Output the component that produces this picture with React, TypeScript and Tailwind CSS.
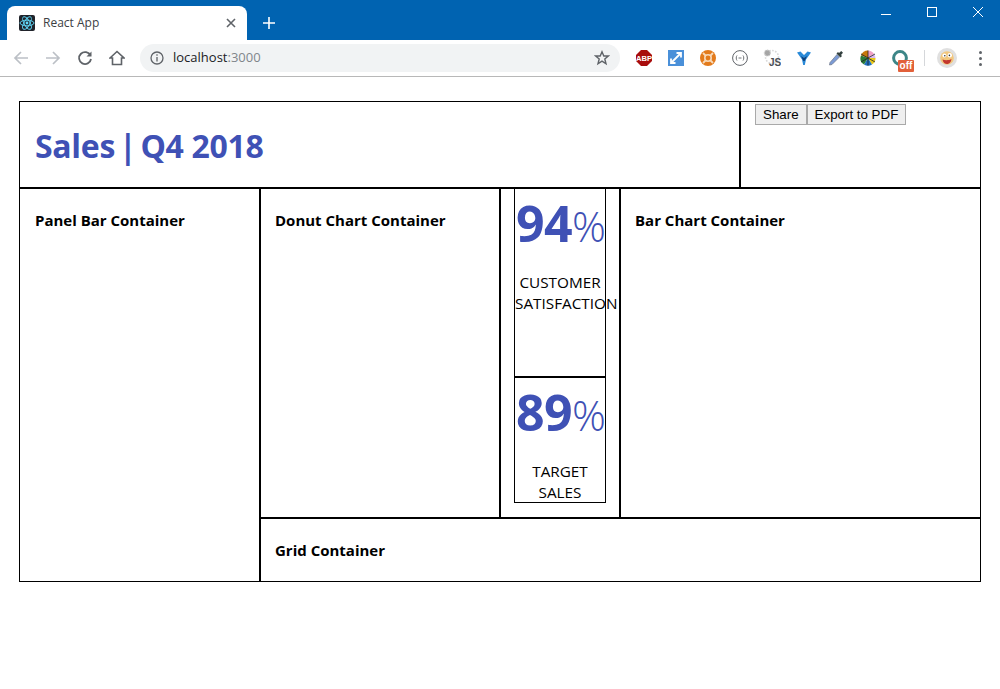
const Favicon = () => (
  <svg width="16" height="16" viewBox="0 0 16 16" className="shrink-0">
    <rect width="16" height="16" rx="2" fill="#20232a" />
    <g fill="none" stroke="#61dafb" strokeWidth="0.9">
      <ellipse cx="8" cy="8" rx="7" ry="2.8" />
      <ellipse cx="8" cy="8" rx="7" ry="2.8" transform="rotate(60 8 8)" />
      <ellipse cx="8" cy="8" rx="7" ry="2.8" transform="rotate(120 8 8)" />
    </g>
    <circle cx="8" cy="8" r="1.4" fill="#61dafb" />
  </svg>
);

const Abp = () => (
  <svg width="16" height="16" viewBox="0 0 16 16">
    <polygon points="5,0 11,0 16,5 16,11 11,16 5,16 0,11 0,5" fill="#a80c0c" />
    <text x="8" y="10.8" textAnchor="middle" fontSize="7.6" fontWeight="700" fill="#fff" fontFamily="Liberation Sans, sans-serif">ABP</text>
  </svg>
);

const Expand = () => (
  <svg width="16" height="16" viewBox="0 0 16 16">
    <rect width="16" height="16" fill="#4a90d9" />
    <path d="M3.5 12.5 12.5 3.5M8.5 3h4.5v4.5M3 8.5V13h4.5" fill="none" stroke="#fff" strokeWidth="1.8" />
  </svg>
);

const OrangeRing = () => (
  <svg width="16" height="16" viewBox="0 0 16 16">
    <circle cx="8" cy="8" r="8" fill="#e37b1c" />
    <circle cx="8" cy="8" r="3.2" fill="none" stroke="#f7d9b8" strokeWidth="1.6" />
    <path d="M3 3 5.5 5.5M13 3 10.5 5.5M3 13 5.5 10.5M13 13 10.5 10.5" stroke="#f7d9b8" strokeWidth="1.8" />
  </svg>
);

const Braces = () => (
  <svg width="16" height="16" viewBox="0 0 16 16" fill="none" stroke="#5f6368">
    <circle cx="8" cy="8" r="7.4" strokeWidth="1" />
    <path d="M5 5.5C4 6.5 4 9.5 5 10.5M11 5.5C12 6.5 12 9.5 11 10.5M6.5 8h3" strokeWidth="0.9" />
  </svg>
);

const JsGear = () => (
  <svg width="18" height="18" viewBox="0 0 18 18">
    <circle cx="9" cy="8" r="6.5" fill="none" stroke="#d8d8d8" strokeWidth="1.6" strokeDasharray="1.6 1.4" />
    <circle cx="4.4" cy="4" r="3" fill="#a5a5a5" stroke="#cfcfcf" strokeWidth="1.2" strokeDasharray="1.4 0.8" />
    <text x="12" y="16.5" textAnchor="middle" fontSize="10" fontWeight="700" fill="#4a4f55" fontFamily="Liberation Sans, sans-serif">JS</text>
  </svg>
);

const Vee = () => (
  <svg width="16" height="16" viewBox="0 0 16 16">
    <path d="M1 2.5 4.5 1.5 8 5 11.5 1.5 15 2.5 10 9.5 8.8 15H7.2L6 9.5Z" fill="#2a8ad8" />
    <path d="M5 6 8 8 11 6 8.6 11H7.4Z" fill="#0f3f78" />
  </svg>
);

const Dropper = () => (
  <svg width="16" height="16" viewBox="0 0 16 16">
    <path d="M9 4.5 11.5 7 4 14.5 1.5 15 2 12.5Z" fill="#7b9bd6" stroke="#6d7686" strokeWidth="0.7" />
    <path d="M8.5 3.5 12.5 7.5 14 6 13 5 15 2.8 13.2 1 11 3 10 2Z" fill="#33403f" />
  </svg>
);

const Wheel = () => (
  <svg width="16" height="16" viewBox="0 0 16 16">
    <path d="M8 8V0.5A7.5 7.5 0 0 0 1 5.5Z" fill="#c8780c" />
    <path d="M8 8V0.5A7.5 7.5 0 0 1 14 4Z" fill="#f0a0c8" />
    <path d="M8 8 14 4A7.5 7.5 0 0 1 15.5 8Z" fill="#d8b8f0" />
    <path d="M8 8H15.5A7.5 7.5 0 0 1 12 14.5Z" fill="#e8c818" />
    <path d="M8 8 12 14.5A7.5 7.5 0 0 1 4 14.5Z" fill="#1f6fc0" />
    <path d="M8 8 4 14.5A7.5 7.5 0 0 1 1 5.5Z" fill="#2a7a3a" />
    <path d="M8 0.5V15.5M1 4 15 12M1 12 15 4" stroke="#222" strokeWidth="0.8" />
  </svg>
);

const OffBadge = () => (
  <div className="relative w-[16px] h-[16px]">
    <svg width="16" height="16" viewBox="0 0 16 16" fill="none">
      <circle cx="8" cy="8" r="6.4" stroke="#3c8587" strokeWidth="3" />
    </svg>
    <span className="absolute left-[6px] top-[10px] w-[16px] h-[12px] rounded-[1px] bg-[#e2603a] text-white text-[10px] leading-[12px] font-bold text-center font-['Liberation_Sans',sans-serif]">
      off
    </span>
  </div>
);

const Avatar = () => (
  <svg width="20" height="20" viewBox="0 0 20 20">
    <circle cx="10" cy="10" r="10" fill="#e0e0e0" />
    <circle cx="10" cy="10" r="6.8" fill="#f2c77e" />
    <circle cx="7.4" cy="7.6" r="2" fill="#fff" />
    <circle cx="12.8" cy="7.2" r="2.2" fill="#fff" />
    <circle cx="7.8" cy="7.8" r="0.8" fill="#333" />
    <circle cx="12.4" cy="7.4" r="0.8" fill="#333" />
    <path d="M5.5 11.5C8 12.5 12 12.5 14.5 11C14 15 11.5 16 10 16 8 16 6 14.5 5.5 11.5Z" fill="#c2362e" />
  </svg>
);

const extensions = [
  { id: "abp", icon: <Abp /> },
  { id: "expand", icon: <Expand /> },
  { id: "ring", icon: <OrangeRing /> },
  { id: "braces", icon: <Braces /> },
  { id: "js", icon: <JsGear /> },
  { id: "vee", icon: <Vee /> },
  { id: "dropper", icon: <Dropper /> },
  { id: "wheel", icon: <Wheel /> },
  { id: "off", icon: <OffBadge /> },
];

const Browser = () => (
  <div className="font-['Open_Sans',sans-serif]">
    <div className="h-[40px] bg-[#0063b1] flex items-end pl-[7px]">
      <div className="relative w-[240px] h-[34px] bg-white rounded-t-[8px] flex items-center pl-[12px] pr-[11px] gap-[8px]">
        <Favicon />
        <span className="text-[12px] text-[#3c4043]">React App</span>
        <svg width="10" height="10" viewBox="0 0 10 10" className="ml-auto" stroke="#5f6368" strokeWidth="1.6">
          <path d="M1 1 9 9M9 1 1 9" />
        </svg>
      </div>
      <svg width="14" height="14" viewBox="0 0 14 14" stroke="#fff" strokeWidth="1.6" className="ml-[15px] mb-[10px]">
        <path d="M7 1V13M1 7H13" />
      </svg>
      <div className="ml-auto self-start flex items-center h-[24px] pr-[17px] gap-[36px]">
        <svg width="10" height="10" viewBox="0 0 10 10" stroke="#fff" strokeWidth="1"><path d="M0 7.5H10" /></svg>
        <svg width="10" height="10" viewBox="0 0 10 10" stroke="#fff" strokeWidth="1" fill="none"><rect x="0.5" y="0.5" width="9" height="9" /></svg>
        <svg width="10" height="10" viewBox="0 0 10 10" stroke="#fff" strokeWidth="1"><path d="M0 0 10 10M10 0 0 10" /></svg>
      </div>
    </div>
    <div className="h-[37px] bg-white border-b border-[#b8b8b8] flex items-center">
      <div className="w-[140px] flex items-center pl-[13px] gap-[16px] shrink-0">
        <svg width="16" height="16" viewBox="0 0 16 16" fill="none" stroke="#bcc0c6" strokeWidth="1.7"><path d="M15 8H2M8 2 2 8 8 14" /></svg>
        <svg width="16" height="16" viewBox="0 0 16 16" fill="none" stroke="#bcc0c6" strokeWidth="1.7"><path d="M1 8H14M8 2 14 8 8 14" /></svg>
        <svg width="16" height="16" viewBox="0 0 16 16" fill="none" stroke="#5f6368" strokeWidth="1.8"><path d="M13.5 5.5A6 6 0 1 0 14 9" /><path d="M14.5 1.5V6.5H9.5" fill="#5f6368" stroke="none" /></svg>
        <svg width="16" height="16" viewBox="0 0 16 16" fill="none" stroke="#5f6368" strokeWidth="1.6"><path d="M1 8 8 1.5 15 8H12.5V14.5H3.5V8Z" /></svg>
      </div>
      <div className="w-[480px] h-[28px] shrink-0 rounded-full bg-[#f1f3f4] flex items-center pl-[10px] pr-[10px] text-[13px]">
        <svg width="14" height="14" viewBox="0 0 14 14" fill="none" stroke="#5f6368" strokeWidth="1.3">
          <circle cx="7" cy="7" r="6" />
          <path d="M7 6V10.5M7 3.2V4.8" />
        </svg>
        <span className="ml-[9px] text-[#202124]">localhost<span className="text-[#80868b]">:3000</span></span>
        <svg width="16" height="16" viewBox="0 0 16 16" fill="none" stroke="#5f6368" strokeWidth="1.4" className="ml-auto">
          <path d="M8 1.8 9.8 6H14.4L10.8 9 12 13.8 8 11.2 4 13.8 5.2 9 1.6 6H6.2Z" />
        </svg>
      </div>
      <div className="flex items-center pl-[8px]">
        {extensions.map((ext) => (
          <div key={ext.id} className="w-[32px] flex justify-center">{ext.icon}</div>
        ))}
      </div>
      <div className="w-px h-[16px] bg-[#d5d7da] ml-[8px]" />
      <div className="ml-[12px]"><Avatar /></div>
      <div className="ml-[22px] flex flex-col gap-[3px]">
        <i className="w-[3px] h-[3px] rounded-full bg-[#5f6368]" />
        <i className="w-[3px] h-[3px] rounded-full bg-[#5f6368]" />
        <i className="w-[3px] h-[3px] rounded-full bg-[#5f6368]" />
      </div>
    </div>
  </div>
);

const Kpi = ({ value, label, height }: { value: number; label: string[]; height: string }) => (
  <div className={`${height} text-center`}>
    <div className="h-[72px] pt-[1px] flex items-baseline leading-[66px] text-[#3f51b5] whitespace-nowrap pl-px">
      <span className="text-[50px] font-bold tracking-[-0.6px]">{value}</span>
      <span className="text-[42px] font-light">%</span>
    </div>
    <div className="mt-[11px] text-[15.3px] leading-[21px] text-black">
      {label.map((l) => (
        <div key={l}>{l}</div>
      ))}
    </div>
  </div>
);

const Heading = ({ children }: { children: string }) => (
  <h3 className="text-[15px] leading-[20px] font-bold text-black">{children}</h3>
);

export default function App() {
  return (
    <div className="min-h-screen bg-white">
      <Browser />
      <div className="mt-[24px] ml-[19px] w-[962px] font-['Open_Sans',sans-serif] border border-black">
        <div className="flex h-[87px] border-b-2 border-black">
          <div className="flex-1 flex items-center pl-[15px] pt-[3px]">
            <h1 className="text-[32px] leading-[44px] font-bold tracking-[-0.3px] text-[#3f51b5]">
              <span className="[word-spacing:-4px]">Sales | </span>Q4 2018
            </h1>
          </div>
          <div className="w-[241px] border-l-2 border-black pl-[14px] pt-[2px] flex items-start font-['Liberation_Sans',sans-serif] text-[13.33px] text-black">
            <button className="h-[21px] px-[7px] border border-[#a9a9a9] bg-[#efefef]">Share</button>
            <button className="h-[21px] px-[7px] border border-[#a9a9a9] bg-[#efefef]">Export to PDF</button>
          </div>
        </div>
        <div className="flex h-[392px]">
          <div className="w-[241px] border-r-2 border-black pl-[15px] pt-[21px]">
            <Heading>Panel Bar Container</Heading>
          </div>
          <div className="flex-1 flex flex-col">
            <div className="flex h-[330px] border-b-2 border-black">
              <div className="w-[240px] border-r-2 border-black pl-[14px] pt-[21px]">
                <Heading>Donut Chart Container</Heading>
              </div>
              <div className="w-[120px] border-r-2 border-black pl-[13px]">
                <div className="w-[92px] h-[314px] border-x border-b border-black">
                  <div className="border-b-2 border-black">
                    <Kpi value={94} label={["CUSTOMER", "SATISFACTION"]} height="h-[187px]" />
                  </div>
                  <Kpi value={89} label={["TARGET", "SALES"]} height="h-[124px]" />
                </div>
              </div>
              <div className="flex-1 pl-[14px] pt-[21px]">
                <Heading>Bar Chart Container</Heading>
              </div>
            </div>
            <div className="pl-[14px] pt-[21px]">
              <Heading>Grid Container</Heading>
            </div>
          </div>
        </div>
      </div>
    </div>
  );
}
